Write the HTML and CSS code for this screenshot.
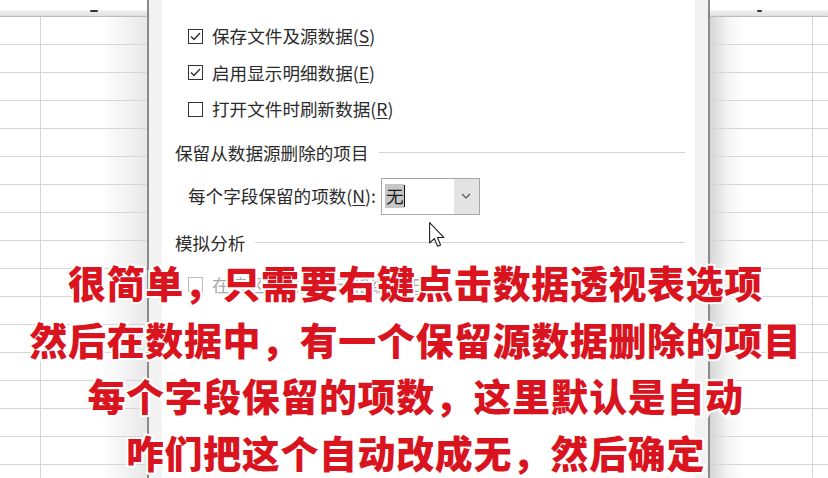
FILE: index.html
```html
<!DOCTYPE html>
<html lang="zh-CN">
<head>
<meta charset="utf-8">
<title>数据透视表选项</title>
<link rel="stylesheet" href="styles.css">
</head>
<body>
<div class="screen">
  <div class="sheet sheet-left">
    <div class="col-hdr"><span class="hdr-mark"></span></div>
    <div class="rows">
      <div class="row"><div class="c c1"></div><div class="c c2"></div></div>
      <div class="row"><div class="c c1"></div><div class="c c2"></div></div>
      <div class="row"><div class="c c1"></div><div class="c c2"></div></div>
      <div class="row"><div class="c c1"></div><div class="c c2"></div></div>
      <div class="row"><div class="c c1"></div><div class="c c2"></div></div>
      <div class="row"><div class="c c1"></div><div class="c c2"></div></div>
      <div class="row"><div class="c c1"></div><div class="c c2"></div></div>
      <div class="row"><div class="c c1"></div><div class="c c2"></div></div>
      <div class="row"><div class="c c1"></div><div class="c c2"></div></div>
      <div class="row"><div class="c c1"></div><div class="c c2"></div></div>
      <div class="row"><div class="c c1"></div><div class="c c2"></div></div>
      <div class="row"><div class="c c1"></div><div class="c c2"></div></div>
      <div class="row"><div class="c c1"></div><div class="c c2"></div></div>
      <div class="row"><div class="c c1"></div><div class="c c2"></div></div>
      <div class="row"><div class="c c1"></div><div class="c c2"></div></div>
      <div class="row"><div class="c c1"></div><div class="c c2"></div></div>
      <div class="row"><div class="c c1"></div><div class="c c2"></div></div>
    </div>
  </div>
  <div class="divider"></div>
  <div class="edge"></div>

  <div class="dialog">
    <div class="check-row">
      <span class="box"><svg viewBox="0 0 15 15" width="15" height="15"><path d="M3 7.5 L6 10.5 L12 4" fill="none" stroke="#2a2a2a" stroke-width="1.3"/></svg></span>
      <span class="lbl">保存文件及源数据(<u>S</u>)</span>
    </div>
    <div class="check-row">
      <span class="box"><svg viewBox="0 0 15 15" width="15" height="15"><path d="M3 7.5 L6 10.5 L12 4" fill="none" stroke="#2a2a2a" stroke-width="1.3"/></svg></span>
      <span class="lbl">启用显示明细数据(<u>E</u>)</span>
    </div>
    <div class="check-row">
      <span class="box"></span>
      <span class="lbl">打开文件时刷新数据(<u>R</u>)</span>
    </div>

    <div class="group-title first"><span>保留从数据源删除的项目</span><span class="rule"></span></div>
    <div class="combo-row">
      <span class="lbl">每个字段保留的项数(<u>N</u>):</span>
      <div class="combo">
        <div class="combo-text"><span class="sel">无</span><span class="caret"></span></div>
        <div class="combo-btn"><svg viewBox="0 0 10 6" width="10" height="6"><path d="M1 1 L5 5 L9 1" fill="none" stroke="#555" stroke-width="1.2"/></svg></div>
      </div>
    </div>

    <div class="group-title second"><span>模拟分析</span><span class="rule"></span></div>
    <div class="check-row disabled">
      <span class="box"></span>
      <span class="lbl">在值区域启用单元格编辑(<u>E</u>)</span>
    </div>
  </div>

  <div class="edge"></div>
  <div class="divider"></div>
  <div class="sheet sheet-right">
    <div class="col-hdr"><span class="hdr-mark right"></span></div>
    <div class="rows">
      <div class="row"><div class="c c3"></div><div class="c c4"></div></div>
      <div class="row"><div class="c c3"></div><div class="c c4"></div></div>
      <div class="row"><div class="c c3"></div><div class="c c4"></div></div>
      <div class="row"><div class="c c3"></div><div class="c c4"></div></div>
      <div class="row"><div class="c c3"></div><div class="c c4"></div></div>
      <div class="row"><div class="c c3"></div><div class="c c4"></div></div>
      <div class="row"><div class="c c3"></div><div class="c c4"></div></div>
      <div class="row"><div class="c c3"></div><div class="c c4"></div></div>
      <div class="row"><div class="c c3"></div><div class="c c4"></div></div>
      <div class="row"><div class="c c3"></div><div class="c c4"></div></div>
      <div class="row"><div class="c c3"></div><div class="c c4"></div></div>
      <div class="row"><div class="c c3"></div><div class="c c4"></div></div>
      <div class="row"><div class="c c3"></div><div class="c c4"></div></div>
      <div class="row"><div class="c c3"></div><div class="c c4"></div></div>
      <div class="row"><div class="c c3"></div><div class="c c4"></div></div>
      <div class="row"><div class="c c3"></div><div class="c c4"></div></div>
      <div class="row"><div class="c c3"></div><div class="c c4"></div></div>
    </div>
  </div>

  <svg class="pointer" viewBox="0 0 13 21" width="16" height="26">
    <path d="M0.5 0.5 L0.5 17 L4.3 13.4 L7 19.6 L9.4 18.6 L6.8 12.5 L12 12.5 Z" fill="#fff" stroke="#222" stroke-width="0.9" stroke-linejoin="round"/>
  </svg>

  <div class="subs">
    <p>很简单，只需要右键点击数据透视表选项</p>
    <p>然后在数据中，有一个保留源数据删除的项目</p>
    <p>每个字段保留的项数，这里默认是自动</p>
    <p>咋们把这个自动改成无，然后确定</p>
  </div>
</div>
</body>
</html>
```

FILE: styles.css
```css
* { box-sizing: border-box; }
html, body { margin: 0; padding: 0; }
body {
  width: 828px;
  height: 478px;
  overflow: hidden;
  background: #fff;
  font-family: "Noto Sans CJK SC", "Noto Sans", sans-serif;
}
.screen {
  position: relative;
  width: 828px;
  height: 478px;
  display: flex;
  overflow: hidden;
}

/* spreadsheet */
.sheet { display: flex; flex-direction: column; height: 100%; }
.sheet-left { width: 147px; }
.sheet-right { flex: 1; }
.col-hdr {
  height: 17px;
  flex: none;
  background: linear-gradient(to bottom, #fff 0, #fff 10px, #ededed 11px, #e2e2e2 16px);
  border-bottom: 1px solid #bcbcbc;
  position: relative;
}
.hdr-mark {
  position: absolute;
  left: 90px;
  top: 10px;
  width: 8px;
  height: 2px;
  border-radius: 1px;
  background: #333;
}
.hdr-mark.right { left: 47px; width: 5px; }
.rows { flex: 1; }
.sheet-left .rows { background: linear-gradient(to right, #fff 0, #fff 100px, #e8e8e8 147px); }
.sheet-right .rows { background: linear-gradient(to right, #d6d6d6 0, #f4f4f4 18px, #fff 34px); }
.row {
  height: 28px;
  display: flex;
  border-bottom: 1px solid #d6d6d6;
}
.c { height: 100%; }
.c1 { width: 41px; border-right: 1px solid #d6d6d6; }
.c2 { flex: 1; }
.c3 { width: 103px; border-right: 1px solid #d6d6d6; }
.c4 { flex: 1; }

.divider { width: 2px; background: #8a8a8a; flex: none; }
.edge { width: 13px; background: #f2f2f2; flex: none; }

/* dialog */
.dialog {
  width: 533px;
  flex: none;
  background: #fff;
  padding: 18px 10px 0 13px;
  color: #2b2b2b;
  font-size: 17.6px;
  display: flex;
  flex-direction: column;
}
.check-row {
  height: 36.5px;
  display: flex;
  align-items: center;
  padding-left: 13px;
  gap: 9px;
}
.box {
  width: 15px;
  height: 15px;
  border: 1px solid #333;
  background: #fff;
  flex: none;
  position: relative;
}
.box svg { position: absolute; left: -1px; top: -1px; }
.lbl { white-space: nowrap; line-height: 24px; }
u { text-underline-offset: 2px; text-decoration-thickness: 1px; }

.group-title {
  display: flex;
  align-items: center;
  gap: 10px;
  line-height: 24px;
  white-space: nowrap;
}
.group-title.first { margin-top: 13px; }
.group-title.second { margin-top: 16px; }
.rule { flex: 1; height: 1px; background: #d4d4d4; }

.combo-row {
  margin-top: 13px;
  padding-left: 13px;
  height: 37px;
  display: flex;
  align-items: center;
  gap: 5px;
}
.combo {
  width: 99px;
  height: 37px;
  border: 1px solid #a6a6a6;
  display: flex;
}
.combo-text {
  flex: 1;
  display: flex;
  align-items: center;
  padding-left: 3px;
}
.sel {
  background: #c6c6c6;
  line-height: 24px;
  padding: 0 1px;
  color: #1a1a1a;
}
.caret { width: 1px; height: 22px; background: #111; }
.combo-btn {
  width: 25px;
  background: #e3e3e3;
  display: flex;
  align-items: center;
  justify-content: center;
}

.check-row.disabled { margin-top: 18px; height: 24px; color: #a8a8a8; }
.check-row.disabled .box { border-color: #bcbcbc; }

/* mouse pointer over the dialog */
.pointer {
  position: absolute;
  left: 429px;
  top: 222px;
}

/* subtitles */
.subs {
  position: absolute;
  left: 0;
  right: 0;
  top: 258px;
  padding-left: 3px;
  text-align: center;
  font-family: "Noto Sans CJK SC", sans-serif;
  font-weight: 900;
  font-size: 38px;
  letter-spacing: 0.6px;
  line-height: 48px;
  color: #d9141f;
  -webkit-text-stroke: 4px #fff;
  paint-order: stroke fill;
  display: flex;
  flex-direction: column;
  gap: 8.5px;
}
.subs p { margin: 0; white-space: nowrap; }
```
